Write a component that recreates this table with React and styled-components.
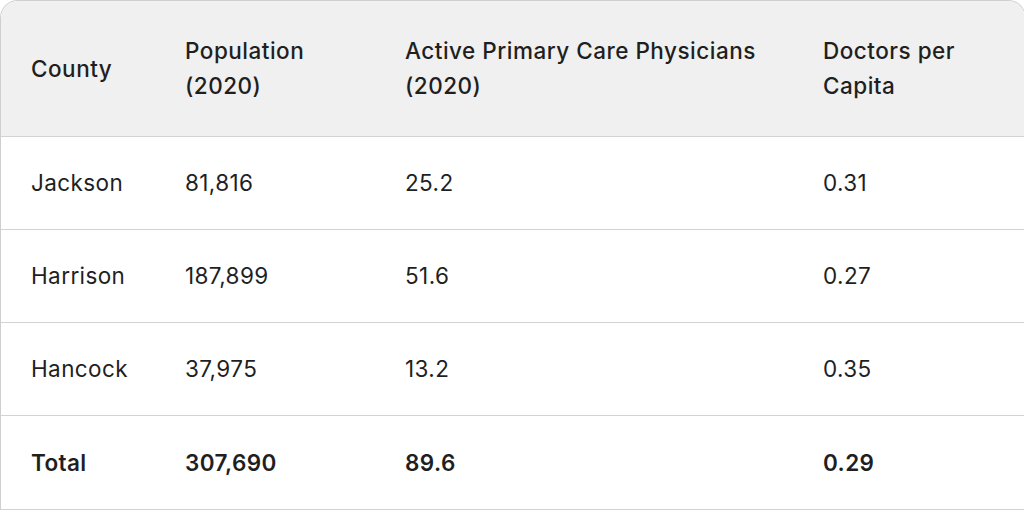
import React from "react";
import styled, { createGlobalStyle } from "styled-components";

const Global = createGlobalStyle`
  html, body { margin: 0; padding: 0; background: #ffffff; overflow: hidden; }
  body { font-family: Inter, "Noto Sans", sans-serif; color: #1f1f1f; }
`;

const Frame = styled.div`
  width: 1026px;
  border: 1px solid #cfcfcf;
  border-bottom: none;
  border-radius: 18px 18px 0 0;
  overflow: hidden;
  box-sizing: border-box;
`;

const Table = styled.table`
  width: 100%;
  border-collapse: collapse;
  table-layout: fixed;
`;

const HeadRow = styled.tr`
  background: #f0f0f0;
  height: 135px;
  border-bottom: 1px solid #d3d3d3;
`;

const Row = styled.tr`
  height: 93.3px;
  border-bottom: 1px solid #d3d3d3;
`;

const Th = styled.th`
  text-align: left;
  font-weight: 500;
  font-size: 22.5px;
  line-height: 35px;
  letter-spacing: 0.5px;
  padding: 0 24px 0 30px;
  vertical-align: middle;
`;

const Td = styled.td`
  text-align: left;
  font-size: 22.5px;
  line-height: 30px;
  letter-spacing: 0.4px;
  padding: 0 24px 0 30px;
  font-weight: ${(p) => (p.$bold ? 600 : 400)};
  vertical-align: middle;
`;

const cols = [154, 220, 418, 232];

const rows = [
  ["Jackson", "81,816", "25.2", "0.31"],
  ["Harrison", "187,899", "51.6", "0.27"],
  ["Hancock", "37,975", "13.2", "0.35"],
];

export default function App() {
  return (
    <>
      <Global />
      <Frame>
        <Table>
          <colgroup>
            {cols.map((w, i) => (
              <col key={i} style={{ width: w }} />
            ))}
          </colgroup>
          <thead>
            <HeadRow>
              <Th>County</Th>
              <Th>Population (2020)</Th>
              <Th>Active Primary Care Physicians (2020)</Th>
              <Th>Doctors per Capita</Th>
            </HeadRow>
          </thead>
          <tbody>
            {rows.map((r) => (
              <Row key={r[0]}>
                {r.map((c, i) => (
                  <Td key={i}>{c}</Td>
                ))}
              </Row>
            ))}
            <Row>
              <Td $bold>Total</Td>
              <Td $bold>307,690</Td>
              <Td $bold>89.6</Td>
              <Td $bold>0.29</Td>
            </Row>
          </tbody>
        </Table>
      </Frame>
    </>
  );
}
